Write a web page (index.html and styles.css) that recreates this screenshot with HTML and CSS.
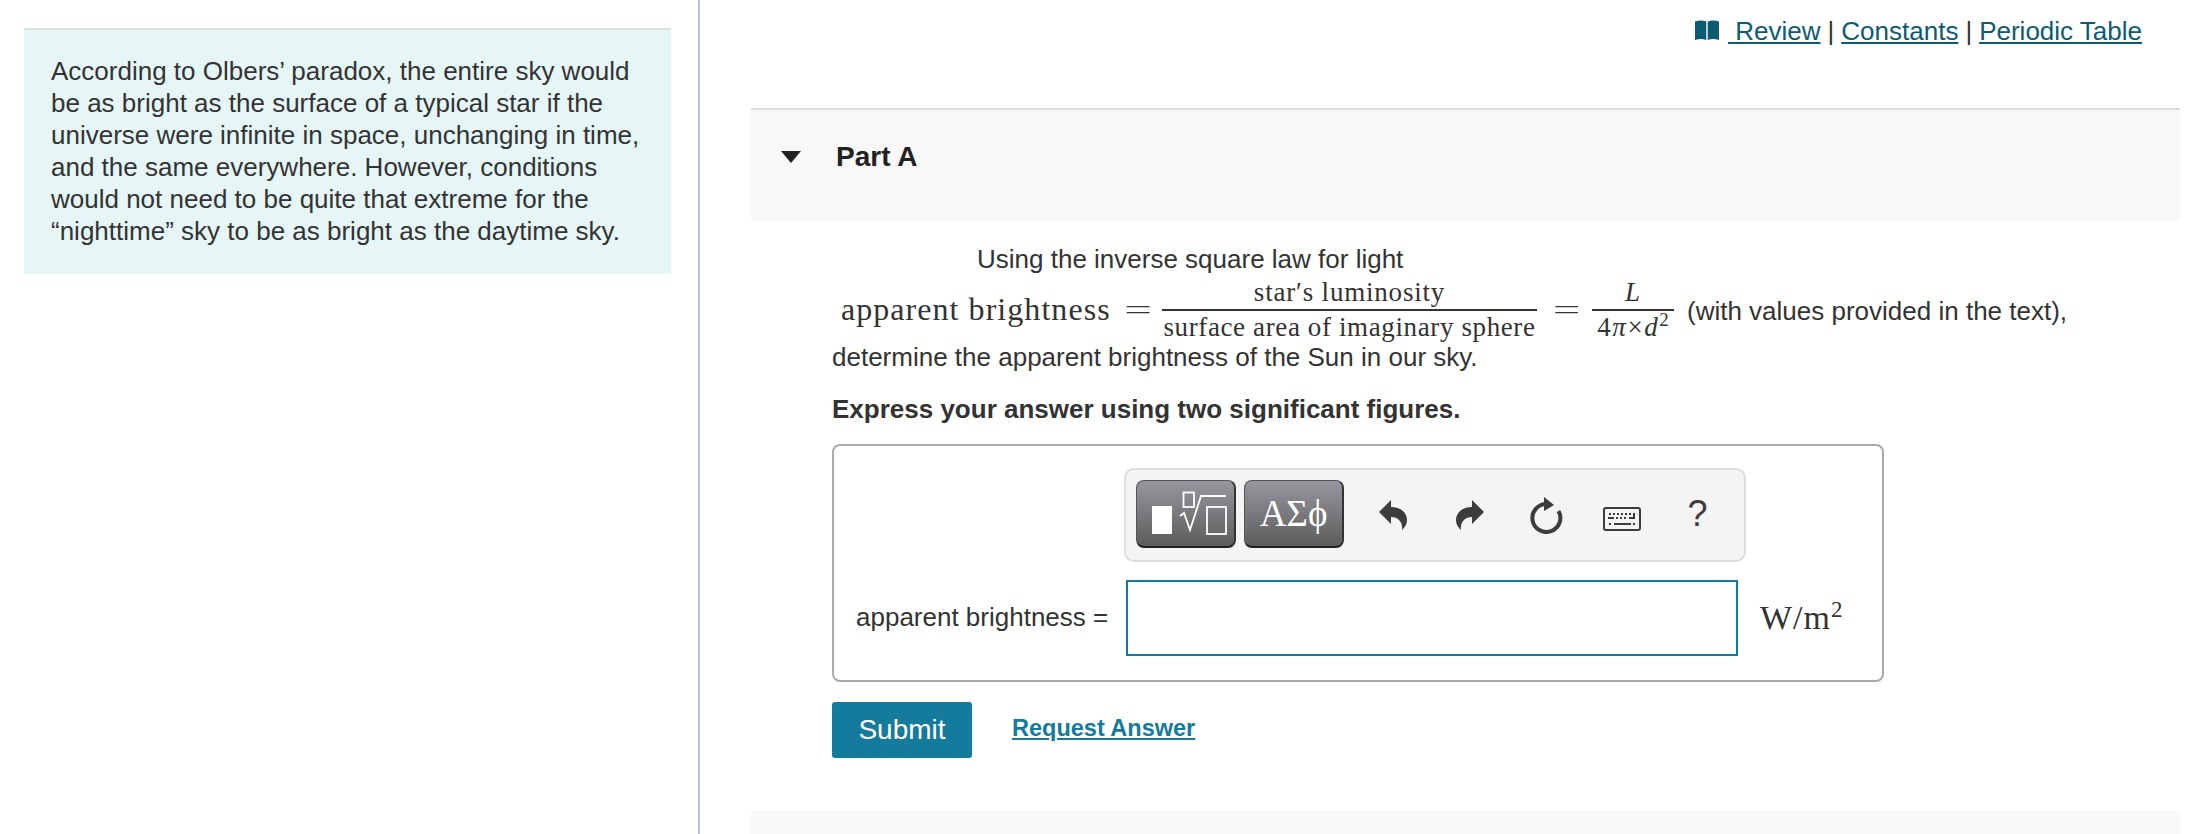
FILE: index.html
```html
<!DOCTYPE html>
<html lang="en">
<head>
<meta charset="utf-8">
<title>Part A</title>
<link rel="stylesheet" href="styles.css">
</head>
<body>
<div class="page">
  <aside class="side">
    <div class="intro">According to Olbers’ paradox, the entire sky would be as bright as the surface of a typical star if the universe were infinite in space, unchanging in time, and the same everywhere. However, conditions would not need to be quite that extreme for the “nighttime” sky to be as bright as the daytime sky.</div>
  </aside>
  <main class="main">
    <div class="toplinks">
      <svg class="book" viewBox="0 0 24 20"><path d="M0 1.5 Q6-.5 11.3 1.5 V20 Q6 18 0 20Z M12.7 1.5 Q18-.5 24 1.5 V20 Q18 18 12.7 20Z"/></svg>
      <a class="tlink" href="#">&nbsp;Review</a><span class="sep">|</span><a class="tlink" href="#">Constants</a><span class="sep">|</span><a class="tlink" href="#">Periodic Table</a>
    </div>
    <div class="part-head"><span class="tri"></span><span class="part-title">Part A</span></div>
    <div class="part-body">
      <div class="line-using">Using the inverse square law for light</div>
      <div class="formula">
        <span class="m m-word">apparent brightness</span>
        <span class="m-eq">=</span>
        <span class="frac frac-a">
          <span class="m num">star′s luminosity</span>
          <span class="m den">surface area of imaginary sphere</span>
        </span>
        <span class="m-eq m-eq2">=</span>
        <span class="frac frac-b">
          <span class="m num"><i>L</i></span>
          <span class="m den">4<i>π</i>×<i>d</i><sup>2</sup></span>
        </span>
        <span class="after">(with values provided in the text),</span>
      </div>
      <div class="line-text">determine the apparent brightness of the Sun in our sky.</div>
      <div class="instr">Express your answer using two significant figures.</div>
      <div class="answer">
        <div class="toolbar">
          <button class="tbtn" type="button" aria-label="templates">
            <svg class="tmpl" viewBox="0 0 100 68" fill="none" stroke="#fff" stroke-width="1.8"><rect x="16" y="26" width="20" height="28" fill="#fff" stroke="none"/><rect x="47.5" y="12.5" width="10.5" height="14.5"/><path d="M44 36 L48 33 L54 50 L65 16 H90"/><rect x="71" y="27" width="19" height="27"/></svg>
          </button>
          <button class="tbtn tbtn-sym" type="button">ΑΣϕ</button>
          <span class="slot"><svg class="ic-undo" viewBox="0 0 28 30"><path d="M0 12 L12 0 V7 C22 7 28 13 28 20 C28 25 25 28 23 30 C24 23 20 17 12 17 V24Z"/></svg></span>
          <span class="slot"><svg class="ic-undo" viewBox="0 0 28 30"><path d="M28 12 L16 0 V7 C6 7 0 13 0 20 C0 25 3 28 5 30 C4 23 8 17 16 17 V24Z"/></svg></span>
          <span class="slot"><svg class="ic-redo" viewBox="0 0 33 37"><path d="M16.5 7 A14 14 0 1 0 28.5 14" fill="none" stroke="#3c3c3c" stroke-width="4"/><path d="M14 0 L24 8 L14 14Z"/></svg></span>
          <span class="slot"><svg class="ic-kb" viewBox="0 0 38 24"><rect x="1" y="1" width="36" height="22" rx="2" fill="none" stroke="#3c3c3c" stroke-width="2"/><path d="M6 6h2v2H6zM10 6h2v2h-2zM14 6h2v2h-2zM18 6h2v2h-2zM22 6h2v2h-2zM26 6h2v2h-2zM30 6h2v6h-6v-2h4zM5 10h6v2H5zM13 10h2v2h-2zM17 10h2v2h-2zM21 10h2v2h-2zM6 16h2v2H6zM11 16h17v2H11zM30 16h2v2h-2z"/></svg></span>
          <span class="slot help">?</span>
        </div>
        <label class="a-label" for="ans">apparent brightness =</label>
        <input class="a-input" id="ans" type="text">
        <span class="m a-unit">W/m<sup>2</sup></span>
      </div>
      <div class="actions">
        <button class="submit" type="button">Submit</button>
        <a class="req" href="#">Request Answer</a>
      </div>
    </div>
    <div class="next-band"></div>
  </main>
</div>
</body>
</html>
```
FILE: styles.css
```css
* { box-sizing: border-box; }
html, body { margin: 0; height: 100%; }
body {
  font-family: "Liberation Sans", Arial, sans-serif;
  font-size: 26px;
  line-height: 32px;
  color: #333;
  background: #fff;
  overflow: hidden;
}
.page { display: flex; height: 834px; }

.side { width: 698px; flex: none; padding: 28px 27px 0 24px; }
.intro {
  background: #e6f6f7;
  border-top: 2px solid #ddd;
  padding: 25px 20px 27px 27px;
  height: 246px;
}

.main {
  flex: 1;
  border-left: 2px solid #b9c8de;
  padding-left: 51px;
  padding-right: 26px;
  display: flex;
  flex-direction: column;
}

.toplinks {
  height: 108px;
  display: flex;
  justify-content: flex-end;
  align-items: flex-start;
  padding: 15px 38px 0 0;
  white-space: pre;
}
.book { width: 24px; height: 20px; fill: #0b5c72; margin: 5px 9px 0 0; flex: none; }
.tlink { color: #0b5c72; text-decoration: underline; }
.sep { margin: 0 7px; }

.part-head {
  height: 113px;
  flex: none;
  background: #f8f8f8;
  border-top: 2px solid #ddd;
  display: flex;
  align-items: center;
  padding: 0 0 18px 30px;
}
.tri {
  width: 0; height: 0;
  border-left: 10.5px solid transparent;
  border-right: 10.5px solid transparent;
  border-top: 12px solid #222;
  margin-right: 35px;
}
.part-title { font-weight: 700; color: #222; font-size: 28px; }

.part-body { padding: 22px 0 0 81px; }
.line-using { padding-left: 145px; }

.m { font-family: "Liberation Serif", "Times New Roman", serif; }
.formula { height: 66px; display: flex; align-items: flex-start; padding-left: 9px; }
.m-word { font-size: 32px; line-height: 36px; margin-top: 16px; letter-spacing: 1.05px; width: 269px; flex: none; white-space: nowrap; }
.m-eq {
  font-family: "DejaVu Sans", sans-serif;
  font-weight: 200;
  font-size: 36px;
  line-height: 36px;
  margin-top: 16px;
  width: 52px;
  flex: none;
  text-align: center;
  padding-left: 4px;
}
.m-eq2 { width: 55px; }
.frac { display: flex; flex-direction: column; align-items: center; flex: none; padding-top: 1px; }
.frac-a { width: 375px; }
.frac-b { width: 82px; }
.frac .num, .frac .den { font-size: 27px; width: 100%; text-align: center; white-space: nowrap; }
.frac .num { line-height: 33px; height: 35px; border-bottom: 2px solid #333; letter-spacing: .8px; }
.frac .den { line-height: 32px; letter-spacing: .62px; }
.frac-b .den { letter-spacing: 1.5px; }
.frac sup { font-size: 19px; line-height: 0; letter-spacing: 0; }
.after { margin: 20px 0 0 13px; white-space: nowrap; }

.instr { font-weight: 700; margin-top: 20px; }

.answer {
  width: 1052px;
  height: 238px;
  margin-top: 19px;
  border: 2px solid #aaa;
  border-radius: 8px;
  padding: 22px 0 0 22px;
  display: grid;
  grid-template-columns: 270px 612px auto;
  grid-template-rows: 94px 76px;
  row-gap: 18px;
  align-items: center;
}
.toolbar {
  grid-column: 2 / 4;
  margin-left: -2px;
  width: 622px;
  height: 94px;
  background: #f4f4f4;
  border: 2px solid #ddd;
  border-radius: 10px;
  padding: 10px 0 0 10px;
  display: flex;
  align-items: flex-start;
}
.tbtn {
  width: 100px;
  height: 68px;
  padding: 0;
  flex: none;
  border: 1px solid #555;
  border-bottom: 2px solid #222;
  border-right: 2px solid #333;
  border-radius: 8px;
  background: linear-gradient(#98969f, #5c5c5c);
  color: #fff;
}
.tbtn-sym { margin: 0 10px 0 8px; font: 37px "Liberation Serif", serif; }
.tmpl { display: block; width: 100px; height: 68px; margin: -1px; }
.slot { width: 77px; height: 68px; flex: none; display: flex; align-items: center; justify-content: center; }
.slot svg { fill: #3c3c3c; }
.ic-undo { width: 28px; height: 30px; margin-top: 2px; }
.ic-redo { width: 33px; height: 37px; margin-top: 2px; }
.ic-kb { width: 38px; height: 24px; margin: 10px 0 0 -3px; }
.help { font-size: 36px; color: #3c3c3c; margin-left: -3px; }

.a-label { margin-top: -2px; }
.a-input { width: 612px; height: 76px; border: 2px solid #147b9c; background: #fff; padding: 0; margin: 0; outline: none; }
.a-unit { font-size: 34px; margin-left: 22px; white-space: nowrap; letter-spacing: 1px; }
.a-unit sup { font-size: 23px; line-height: 0; }

.actions { display: flex; align-items: center; margin-top: 20px; }
.submit {
  width: 140px;
  height: 56px;
  background: #147b9c;
  color: #fff;
  border: 0;
  border-radius: 3px;
  font: 28px "Liberation Sans", Arial, sans-serif;
  padding: 0;
}
.req { margin-left: 40px; color: #147b9c; font-size: 23.5px; font-weight: 700; text-decoration: underline; margin-top: -4px; }

.next-band { height: 24px; margin-top: 52px; background: #f9f9f9; flex: none; }
```
